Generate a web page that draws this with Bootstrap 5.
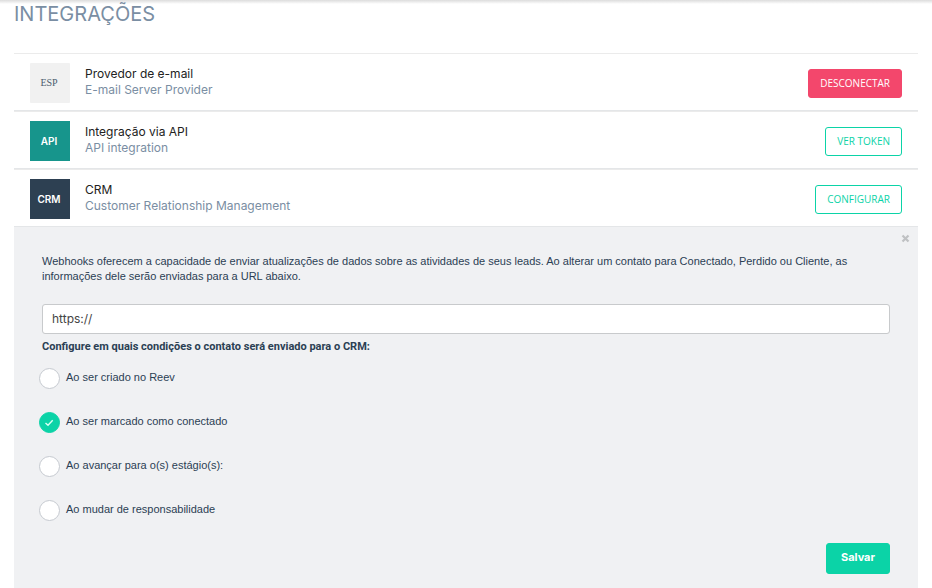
<!DOCTYPE html>
<html lang="pt-BR">
<head>
<meta charset="utf-8">
<meta name="viewport" content="width=device-width, initial-scale=1">
<title>Integrações</title>
<link href="https://cdn.jsdelivr.net/npm/bootstrap@5.3.0/dist/css/bootstrap.min.css" rel="stylesheet">
<style>
  body { font-family: Inter, "Open Sans", sans-serif; font-size: 12px; line-height: 16px; color: #2b4053; background: #fff; }
  .top-shadow { height: 4px; background: linear-gradient(#dcdcdc, #fff); }
  .page { padding: 0 14px; }
  .page-title { font-size: 20px; line-height: 20px; font-weight: 400; color: #7a8ea3; margin: 0 0 29px; }
  .integration { border-top: 1px solid #ebebeb; border-bottom: 1px solid #e4e6e8; padding: 9px 16px 7px; }
  .tile { width: 40px; height: 40px; font-size: 10px; font-weight: 600; color: #fff; padding: 0 2px 0 0; }
  .tile-esp { background: #f1f1f1; color: #4b5d6e; font-family: "Liberation Serif", serif; font-weight: 400; border-radius: 1px; }
  .tile-api { background: #17958c; }
  .tile-crm { background: #2d4052; }
  .labels { margin-left: 15px; padding-bottom: 2px; }
  .name { color: #222; }
  .sub { color: #7a8ea3; }
  .btn-flow { font-family: "Open Sans", sans-serif; font-size: 10px; line-height: 15px; font-weight: 500; padding: 6px 11px; border-radius: 3px; }
  .btn-off { --bs-btn-color: #fff; --bs-btn-bg: #f3476c; --bs-btn-border-color: #f3476c; --bs-btn-hover-color: #fff; --bs-btn-hover-bg: #dc3a5e; }
  .btn-line { --bs-btn-color: #0bd3a7; --bs-btn-bg: #fff; --bs-btn-border-color: #0bd3a7; --bs-btn-hover-color: #fff; --bs-btn-hover-bg: #0bd3a7; }
  .panel { font-family: "Liberation Sans", Arial, sans-serif; background: #f0f1f3; padding: 7px 28px 20px; min-height: calc(100vh - 227px); font-size: 11px; line-height: 15px; }
  .panel-close { width: 9px; height: 9px; margin-right: -20px; color: #bfc1c3; }
  .panel-close svg { display: block; }
  .intro { margin: 11px 0 20px; }
  .url-field { font-family: Inter, sans-serif; font-size: 12px; line-height: 16px; padding: 6px 9px; border-color: #c8cacc; border-radius: 3px; color: #444; }
  .question { font-family: Roboto, sans-serif; font-weight: 700; margin: 5px 0 14px; }
  .options { gap: 23px; margin-left: -3px; }
  .option { gap: 6px; }
  .option .form-check-input { width: 21px; height: 21px; border-radius: 50%; border-color: #c6cad0; background-color: #fff; }
  .option .form-check-input:checked { background-color: #0bd3a7; border-color: #0bd3a7; background-size: 11px 11px;
    background-image: url("data:image/svg+xml,%3Csvg xmlns='http://www.w3.org/2000/svg' viewBox='0 0 11 11'%3E%3Cpath d='M1.5 6l2.5 2.3L8.7 3.2' fill='none' stroke='%23d9fff5' stroke-width='1.4'/%3E%3C/svg%3E"); }
  .option label { padding-bottom: 2px; }
  .btn-save { --bs-btn-color: #fff; --bs-btn-bg: #0bd3a7; --bs-btn-border-color: #0bd3a7; --bs-btn-hover-color: #fff; --bs-btn-hover-bg: #09bd95; font-size: 11px; line-height: 15px; font-weight: 700; padding: 6px 14px 8px; border-radius: 3px; margin-top: 22px; font-family: Inter, sans-serif; }
</style>
<script src="https://cdn.jsdelivr.net/npm/bootstrap@5.3.0/dist/js/bootstrap.bundle.min.js"></script>
</head>
<body>
<div class="top-shadow"></div>
<main class="page">
  <h1 class="page-title">INTEGRAÇÕES</h1>

  <section class="integration d-flex align-items-center">
    <div class="tile tile-esp d-flex align-items-center justify-content-center flex-shrink-0">ESP</div>
    <div class="labels flex-grow-1">
      <div class="name">Provedor de e-mail</div>
      <div class="sub">E-mail Server Provider</div>
    </div>
    <button type="button" class="btn btn-flow btn-off">DESCONECTAR</button>
  </section>

  <section class="integration d-flex align-items-center">
    <div class="tile tile-api d-flex align-items-center justify-content-center flex-shrink-0">API</div>
    <div class="labels flex-grow-1">
      <div class="name">Integração via API</div>
      <div class="sub">API integration</div>
    </div>
    <button type="button" class="btn btn-flow btn-line">VER TOKEN</button>
  </section>

  <section class="integration d-flex align-items-center">
    <div class="tile tile-crm d-flex align-items-center justify-content-center flex-shrink-0">CRM</div>
    <div class="labels flex-grow-1">
      <div class="name">CRM</div>
      <div class="sub">Customer Relationship Management</div>
    </div>
    <button type="button" class="btn btn-flow btn-line">CONFIGURAR</button>
  </section>

  <form class="panel">
    <div class="d-flex justify-content-end">
      <button type="button" class="panel-close border-0 bg-transparent p-0" aria-label="Fechar">
        <svg width="9" height="9" viewBox="0 0 9 9"><path d="M1.5 1.5l6 6M7.5 1.5l-6 6" stroke="currentColor" stroke-width="2.2" fill="none"/></svg>
      </button>
    </div>
    <p class="intro">Webhooks oferecem a capacidade de enviar atualizações de dados sobre as atividades de seus leads. Ao alterar um contato para Conectado, Perdido ou Cliente, as informações dele serão enviadas para a URL abaixo.</p>
    <input type="text" class="form-control url-field" value="https://" aria-label="URL">
    <p class="question">Configure em quais condições o contato será enviado para o CRM:</p>
    <div class="options d-flex flex-column">
      <div class="option d-flex align-items-center">
        <input class="form-check-input m-0" type="checkbox" id="opt-criado">
        <label for="opt-criado">Ao ser criado no Reev</label>
      </div>
      <div class="option d-flex align-items-center">
        <input class="form-check-input m-0" type="checkbox" id="opt-conectado" checked>
        <label for="opt-conectado">Ao ser marcado como conectado</label>
      </div>
      <div class="option d-flex align-items-center">
        <input class="form-check-input m-0" type="checkbox" id="opt-estagio">
        <label for="opt-estagio">Ao avançar para o(s) estágio(s):</label>
      </div>
      <div class="option d-flex align-items-center">
        <input class="form-check-input m-0" type="checkbox" id="opt-resp">
        <label for="opt-resp">Ao mudar de responsabilidade</label>
      </div>
    </div>
    <div class="d-flex justify-content-end">
      <button type="submit" class="btn btn-save">Salvar</button>
    </div>
  </form>
</main>
</body>
</html>
